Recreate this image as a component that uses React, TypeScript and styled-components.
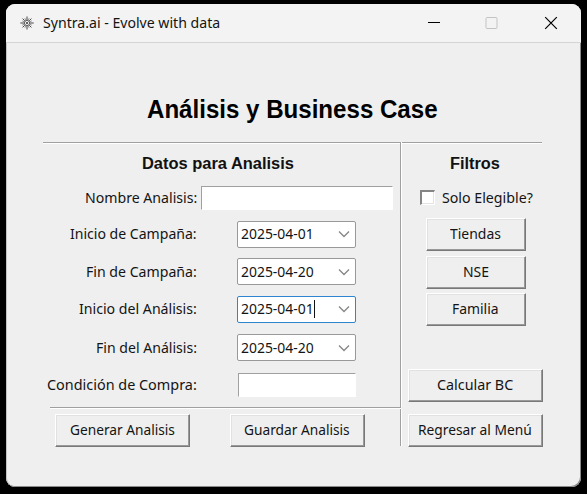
import React from "react";
import styled, { createGlobalStyle } from "styled-components";

const Global = createGlobalStyle`
  * { box-sizing: border-box; }
  html, body { margin: 0; background: #000; overflow: hidden; }
  body { font-family: "Noto Sans", "Open Sans", sans-serif; font-size: 14.5px; color: #141414; }
`;

const Desktop = styled.div`
  width: 587px;
  height: 494px;
  padding: 4px 6px 7px;
  background: #000;
`;

const Window = styled.main`
  width: 575px;
  height: 483px;
  display: flex;
  flex-direction: column;
  background: #efefef;
  border-radius: 9px;
  overflow: hidden;
  box-shadow: inset -1px -1px 0 #8a8a8a, inset 1px 0 0 #c2c2c2;
`;

const TitleBar = styled.header`
  height: 39px;
  flex: none;
  display: flex;
  align-items: center;
  padding-left: 14px;
  background: #f3f3f3;
  border-bottom: 1px solid #d4d4d4;
`;

const Caption = styled.span`
  flex: 1;
  display: flex;
  margin-left: 9px;
`;

const CaptionButtons = styled.div`
  display: flex;
  margin-right: 6px;
  svg { width: 58.5px; height: 38px; }
`;

const Fit = styled.span<{ $w: number }>`
  width: ${(p) => p.$w}px;
  flex: none;
  display: block;
  white-space: nowrap;
  line-height: 20px;
  padding-bottom: 2px;
`;

const Run = styled.span`
  display: inline-block;
  transform-origin: 0 50%;
`;

const Heading = styled.h1`
  margin: 0;
  height: 99px;
  padding-top: 50px;
  padding-left: 141px;
  display: flex;
  font: bold 25px/32px "Liberation Sans", Arial, sans-serif;
  color: #000;
  ${Fit} { line-height: 32px; }
`;

const Panels = styled.div`
  display: grid;
  grid-template-columns: 357px 143px;
  margin-left: 37px;
`;

const DataPanel = styled.section`
  height: 265px;
  padding-top: 2px;
  border-top: 1px solid #a0a0a0;
  border-right: 1px solid #a0a0a0;
  box-shadow: inset 0 1px 0 #fff, 1px 0 0 #fff;
  display: grid;
  grid-template-rows: 37px 31px 42px 33px 42px 35px 40px;
  width: 358px;
`;

const SectionTitle = styled.h2<{ $left: number }>`
  margin: 0;
  padding: 1px 0 0 ${(p) => p.$left}px;
  display: flex;
  align-items: center;
  font: bold 16px/20px "Liberation Sans", Arial, sans-serif;
  color: #111;
  ${Fit} { padding-bottom: 0; }
`;

const Row = styled.label<{ $inset?: number }>`
  display: grid;
  grid-template-columns: 154px 1fr;
  align-items: center;
  column-gap: ${(p) => 4 + (p.$inset ?? 0)}px;
  > span { justify-self: end; }
`;

const Entry = styled.input<{ $w: number }>`
  width: ${(p) => p.$w}px;
  height: 24px;
  padding: 0 4px;
  background: #fff;
  border: 1px solid #fff;
  border-top-color: #a0a0a0;
  border-left-color: #a0a0a0;
  border-radius: 0;
  outline: none;
`;

const Combo = styled.div<{ $active?: boolean }>`
  width: 119px;
  height: 27px;
  display: flex;
  align-items: center;
  padding-left: 3px;
  background: #fff;
  border: 1px solid ${(p) => (p.$active ? "#2f86cf" : "#999")};
  border-radius: 2px;
  svg { width: 12px; height: 8px; margin-left: auto; margin-right: 5px; }
`;

const Caret = styled.i`
  width: 1px;
  height: 18px;
  background: #111;
`;

const FilterPanel = styled.section`
  width: 140px;
  margin-left: 2px;
  border-top: 1px solid #a0a0a0;
  box-shadow: inset 0 1px 0 #fff;
  padding-top: 2px;
  display: flex;
  flex-direction: column;
`;

const Check = styled.label`
  height: 33px;
  display: flex;
  align-items: center;
  padding-left: 17.5px;
  gap: 7px;
  margin-top: -1px;
`;

const FilterTitle = styled(SectionTitle)`
  height: 37px;
`;

const Box = styled.input`
  appearance: none;
  width: 15px;
  height: 15px;
  margin: 0;
  background: #fff;
  border: 2px solid #858585;
  border-right: 1px solid #fff;
  border-bottom: 1px solid #fff;
  box-shadow: inset -1px -1px 0 #e3e3e3;
`;

const Button = styled.button<{ $w: number }>`
  width: ${(p) => p.$w}px;
  height: 33px;
  flex: none;
  padding: 0 1px 1px 0;
  display: flex;
  align-items: center;
  justify-content: center;
  font: inherit;
  color: inherit;
  background: #efefef;
  border: 1px solid #fff;
  border-right-color: #787878;
  border-bottom-color: #787878;
  box-shadow: inset -1px -1px 0 #9a9a9a, inset 1px 1px 0 #e1e1e1;
`;

const FilterButtons = styled.div`
  display: grid;
  row-gap: 4.5px;
  padding: 4px 0 0 24px;
`;

const Calculate = styled.div`
  margin: auto 0 5px 6px;
`;

const Actions = styled.div`
  grid-column: 1 / -1;
  display: flex;
  height: 39px;
`;

const ActionLeft = styled.div`
  width: 351px;
  margin-left: 7px;
  border-top: 1px solid #a0a0a0;
  box-shadow: inset 0 1px 0 #fff;
  padding: 6px 0 0 5px;
  display: flex;
  gap: 40px;
`;

const ActionRight = styled.div`
  margin-top: 2px;
  margin-left: -1px;
  border-left: 1px solid #a0a0a0;
  box-shadow: inset 1px 0 0 #fff;
  padding: 5px 0 0 7px;
  height: 37px;
`;

/* Keeps every text run at a fixed width whatever the glyph advances are. */
function Text({ children, w }: { children: string; w: number }) {
  const ref = React.useRef<HTMLSpanElement>(null);
  React.useLayoutEffect(() => {
    const inner = ref.current!;
    inner.style.transform = `scaleX(${w / inner.offsetWidth})`;
  }, [w]);
  return (
    <Fit $w={w}>
      <Run ref={ref}>{children}</Run>
    </Fit>
  );
}

function DateBox({ value, active }: { value: string; active?: boolean }) {
  return (
    <Combo $active={active}>
      <Text w={73}>{value}</Text>
      {active && <Caret />}
      <svg viewBox="0 0 12 8" fill="none" stroke="#868686" strokeWidth="1.3">
        <path d="M1 1.5 6 6.5 11 1.5" />
      </svg>
    </Combo>
  );
}

const dates = [
  { label: "Inicio de Campaña:", w: 127, value: "2025-04-01" },
  { label: "Fin de Campaña:", w: 111, value: "2025-04-20" },
  { label: "Inicio del Análisis:", w: 118, value: "2025-04-01", active: true },
  { label: "Fin del Análisis:", w: 101, value: "2025-04-20" },
];

export default function App() {
  return (
    <Desktop>
      <Global />
      <Window>
        <TitleBar>
          <svg width="14" height="14" viewBox="0 0 14 14" fill="none" stroke="#333" strokeWidth="0.9">
            <path d="M7 .5v3.500M7 10v3.500M.3 7h3.700M10 7h3.700M2.600 2.600l2.200 2.200M9.200 9.200l2.200 2.200M11.400 2.600 9.200 4.800M4.800 9.200l-2.200 2.200" />
            <path d="M4.800 2.200 5.700 4M9.200 2.200 8.300 4M4.800 11.800 5.700 10M9.200 11.800 8.300 10M2.200 4.800 4 5.700M11.800 4.800 10 5.700M2.200 9.200 4 8.300M11.800 9.200 10 8.300" strokeWidth=".5" />
            <circle cx="7" cy="7" r="2.600" strokeWidth=".8" />
            <circle cx="7" cy="7" r="1" fill="#333" stroke="none" />
          </svg>
          <Caption><Text w={177}>Syntra.ai - Evolve with data</Text></Caption>
          <CaptionButtons>
            <svg viewBox="0 0 58.5 38" stroke="#000"><path d="M28 18.500h12" /></svg>
            <svg viewBox="0 0 58.5 38" fill="none" stroke="#c3c3c3"><rect x="28" y="13.500" width="11" height="11" rx="1" /></svg>
            <svg viewBox="0 0 58.5 38" stroke="#000" strokeWidth="1.200"><path d="m28.200 13.200 11.600 11.600m0-11.600L28.200 24.800" /></svg>
          </CaptionButtons>
        </TitleBar>
        <Heading><Text w={291}>Análisis y Business Case</Text></Heading>
        <Panels>
          <DataPanel>
            <SectionTitle $left={99}><Text w={152}>Datos para Analisis</Text></SectionTitle>
            <Row>
              <Text w={112}>Nombre Analisis:</Text>
              <Entry $w={192} />
            </Row>
            {dates.map((d) => (
              <Row as="div" key={d.label} $inset={36}>
                <Text w={d.w}>{d.label}</Text>
                <DateBox value={d.value} active={d.active} />
              </Row>
            ))}
            <Row $inset={37}>
              <Text w={150}>Condición de Compra:</Text>
              <Entry $w={118} />
            </Row>
          </DataPanel>
          <FilterPanel>
            <FilterTitle $left={48}><Text w={50}>Filtros</Text></FilterTitle>
            <Check>
              <Box type="checkbox" />
              <Text w={91}>Solo Elegible?</Text>
            </Check>
            <FilterButtons>
              <Button $w={100}><Text w={51}>Tiendas</Text></Button>
              <Button $w={100}><Text w={26}>NSE</Text></Button>
              <Button $w={100}><Text w={47}>Familia</Text></Button>
            </FilterButtons>
            <Calculate>
              <Button $w={135}><Text w={76}>Calcular BC</Text></Button>
            </Calculate>
          </FilterPanel>
          <Actions>
            <ActionLeft>
              <Button $w={135}><Text w={105}>Generar Analisis</Text></Button>
              <Button $w={135}><Text w={106}>Guardar Analisis</Text></Button>
            </ActionLeft>
            <ActionRight>
              <Button $w={135}><Text w={114}>Regresar al Menú</Text></Button>
            </ActionRight>
          </Actions>
        </Panels>
      </Window>
    </Desktop>
  );
}
